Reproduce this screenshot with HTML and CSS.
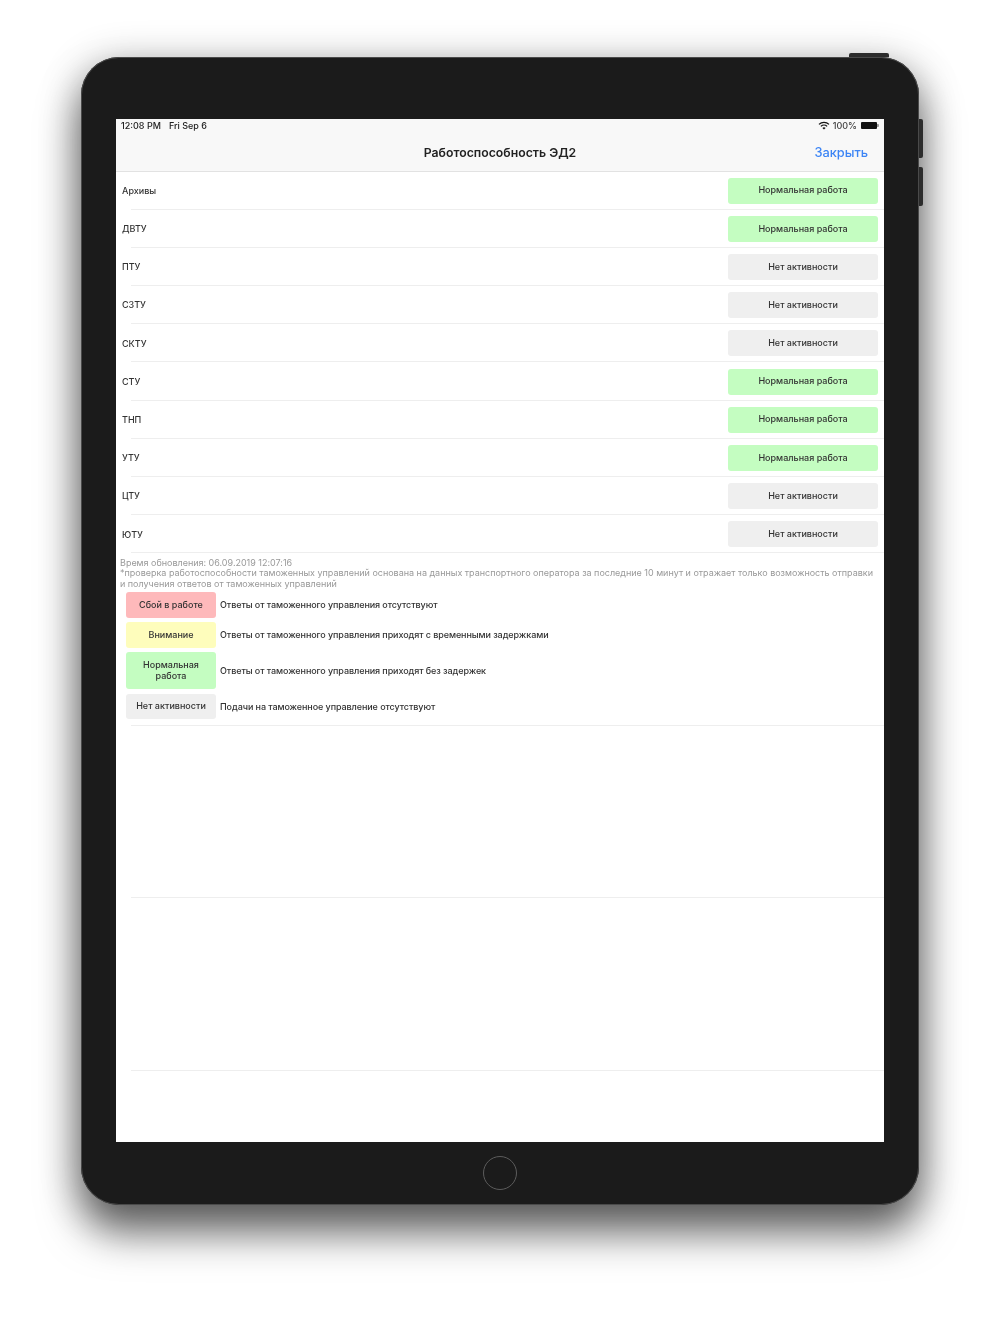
FILE: index.html
```html
<!DOCTYPE html>
<html lang="ru">
<head>
    <meta charset="UTF-8">
    <title>Работоспособность ЭД2</title>
    <link rel="stylesheet" href="styles.css">
</head>
<body>
    <div class="tablet">
        <span class="side-btn top-btn"></span>
        <span class="side-btn vol-up"></span>
        <span class="side-btn vol-down"></span>

        <div class="screen">
            <header class="navbar">
                <div class="status-bar">
                    <span class="status-time">12:08 PM</span>
                    <span class="status-date">Fri Sep 6</span>
                    <span class="status-right">
                        <svg class="wifi" width="12" height="9" viewBox="0 0 12 9">
                            <path d="M6 8.6 4.4 6.9a2.3 2.3 0 0 1 3.2 0z" fill="#111"/>
                            <path d="M2.9 5.4a4.4 4.4 0 0 1 6.2 0" fill="none" stroke="#111" stroke-width="1.3"/>
                            <path d="M1 3.4a7.1 7.1 0 0 1 10 0" fill="none" stroke="#111" stroke-width="1.3"/>
                        </svg>
                        <span class="status-pct">100%</span>
                        <span class="battery"></span>
                    </span>
                </div>
                <div class="nav-row">
                    <h1 class="nav-title">Работоспособность ЭД2</h1>
                    <span class="nav-close">Закрыть</span>
                </div>
            </header>

            <ul class="status-list">
                <li class="status-row"><span class="row-name">Архивы</span><span class="badge row-badge ok">Нормальная работа</span></li>
                <li class="status-row"><span class="row-name">ДВТУ</span><span class="badge row-badge ok">Нормальная работа</span></li>
                <li class="status-row"><span class="row-name">ПТУ</span><span class="badge row-badge idle">Нет активности</span></li>
                <li class="status-row"><span class="row-name">СЗТУ</span><span class="badge row-badge idle">Нет активности</span></li>
                <li class="status-row"><span class="row-name">СКТУ</span><span class="badge row-badge idle">Нет активности</span></li>
                <li class="status-row"><span class="row-name">СТУ</span><span class="badge row-badge ok">Нормальная работа</span></li>
                <li class="status-row"><span class="row-name">ТНП</span><span class="badge row-badge ok">Нормальная работа</span></li>
                <li class="status-row"><span class="row-name">УТУ</span><span class="badge row-badge ok">Нормальная работа</span></li>
                <li class="status-row"><span class="row-name">ЦТУ</span><span class="badge row-badge idle">Нет активности</span></li>
                <li class="status-row"><span class="row-name">ЮТУ</span><span class="badge row-badge idle">Нет активности</span></li>
            </ul>

            <section class="legend">
                <p class="note">Время обновления: 06.09.2019 12:07:16<br>*проверка работоспособности таможенных управлений основана на данных транспортного оператора за последние 10 минут и отражает только возможность отправки и получения ответов от таможенных управлений</p>
                <div class="legend-item"><span class="badge legend-badge fail">Сбой в работе</span><span class="legend-text">Ответы от таможенного управления отсутствуют</span></div>
                <div class="legend-item"><span class="badge legend-badge warn">Внимание</span><span class="legend-text">Ответы от таможенного управления приходят с временными задержками</span></div>
                <div class="legend-item"><span class="badge legend-badge tall ok">Нормальная работа</span><span class="legend-text">Ответы от таможенного управления приходят без задержек</span></div>
                <div class="legend-item"><span class="badge legend-badge idle">Нет активности</span><span class="legend-text">Подачи на таможенное управление отсутствуют</span></div>
            </section>

            <div class="empty-row"></div>
            <div class="empty-row"></div>
        </div>

        <div class="bottom-bezel">
            <span class="home-btn"></span>
        </div>
    </div>
</body>
</html>
```

FILE: styles.css
```css
* {
    box-sizing: border-box;
    margin: 0;
    padding: 0;
}

body {
    width: 1000px;
    height: 1334px;
    overflow: hidden;
    background: white;
    font-family: Inter, "Liberation Sans", sans-serif;
    padding-top: 57px;
}

/* корпус планшета */
.tablet {
    position: relative;
    width: 838px;
    height: 1148px;
    margin-left: 81px;
    padding: 62px 35px 0;
    background: #1b1b1b;
    border-radius: 38px;
    box-shadow: inset 0 0 0 1px #4a4a4a, 0 28px 42px rgba(0, 0, 0, 0.55), 0 6px 40px rgba(0, 0, 0, 0.3);
}

.side-btn {
    position: absolute;
    background: #2c2c2c;
}

.top-btn {
    top: -4px;
    right: 30px;
    width: 40px;
    height: 4px;
    border-radius: 2px 2px 0 0;
}

.vol-up,
.vol-down {
    right: -4px;
    width: 4px;
    height: 39px;
    border-radius: 0 2px 2px 0;
}

.vol-up {
    top: 62px;
}

.vol-down {
    top: 110px;
}

/* экран */
.screen {
    width: 768px;
    height: 1023px;
    background: white;
    overflow: hidden;
    filter: blur(0.7px);
}

.navbar {
    height: 52.5px;
    background: #f8f8f8;
    border-bottom: 1px solid #e2e2e2;
}

.status-bar {
    display: flex;
    align-items: center;
    height: 13px;
    padding: 0 5px;
    font-size: 9px;
    font-weight: 500;
    color: #222;
}

.status-date {
    margin-left: 8px;
}

.status-right {
    display: flex;
    align-items: center;
    margin-left: auto;
    color: #444;
}

.status-pct {
    margin: 0 4px 0 3px;
}

.battery {
    position: relative;
    width: 16px;
    height: 7px;
    margin-right: 2px;
    background: #111;
    border-radius: 1px;
}

.battery::after {
    content: "";
    position: absolute;
    left: 16px;
    top: 2px;
    width: 1.5px;
    height: 3px;
    background: #999;
    border-radius: 0 1px 1px 0;
}

.nav-row {
    position: relative;
    height: 38.5px;
    padding-top: 2px;
    display: flex;
    align-items: center;
    justify-content: center;
}

.nav-title {
    font-size: 12.25px;
    font-weight: 600;
    color: #222;
}

.nav-close {
    position: absolute;
    right: 16px;
    font-size: 12.8px;
    font-weight: 500;
    color: #3d85f5;
}

/* список управлений */
.status-list {
    list-style: none;
}

.status-row {
    position: relative;
    height: 38.2px;
    display: flex;
    align-items: center;
    justify-content: space-between;
    padding: 0 6px;
    font-size: 9px;
    font-weight: 500;
    color: #333;
}

.row-name {
    padding-bottom: 0.5px;
}

.status-row::after,
.empty-row::after,
.legend::after {
    content: "";
    position: absolute;
    left: 15px;
    right: 0;
    bottom: 0;
    height: 1px;
    background: #eee;
}

.badge {
    display: flex;
    align-items: center;
    justify-content: center;
    text-align: center;
    border-radius: 3px;
    font-size: 9px;
    font-weight: 500;
    line-height: 10.5px;
    color: #333;
}

.row-badge {
    width: 150px;
    height: 26px;
}

.ok {
    background: #c4fdc1;
}

.idle {
    background: #efefef;
}

.fail {
    background: #feb9bb;
}

.warn {
    background: #fefdbc;
}

/* легенда */
.legend {
    position: relative;
    height: 172.3px;
    padding: 4.5px 4px 0;
}

.note {
    font-size: 9px;
    letter-spacing: -0.012px;
    line-height: 10.5px;
    color: #999;
    margin: 0 4px 3px 0;
}

.legend-item {
    display: flex;
    align-items: center;
    gap: 4px;
    margin: 0 0 4.5px 6px;
    font-size: 9px;
    font-weight: 500;
    color: #333;
}

.legend-text {
    padding-bottom: 1px;
    letter-spacing: -0.08px;
}

.legend-badge {
    width: 90px;
    height: 25.5px;
    flex-shrink: 0;
    padding: 0 5px;
}

.legend-badge.tall {
    height: 37px;
}

.empty-row {
    position: relative;
    height: 172.6px;
}

.bottom-bezel {
    height: 62px;
    display: flex;
    align-items: center;
    justify-content: center;
}

.home-btn {
    width: 34px;
    height: 34px;
    border: 1.5px solid #5c5c5c;
    border-radius: 50%;
}
```
